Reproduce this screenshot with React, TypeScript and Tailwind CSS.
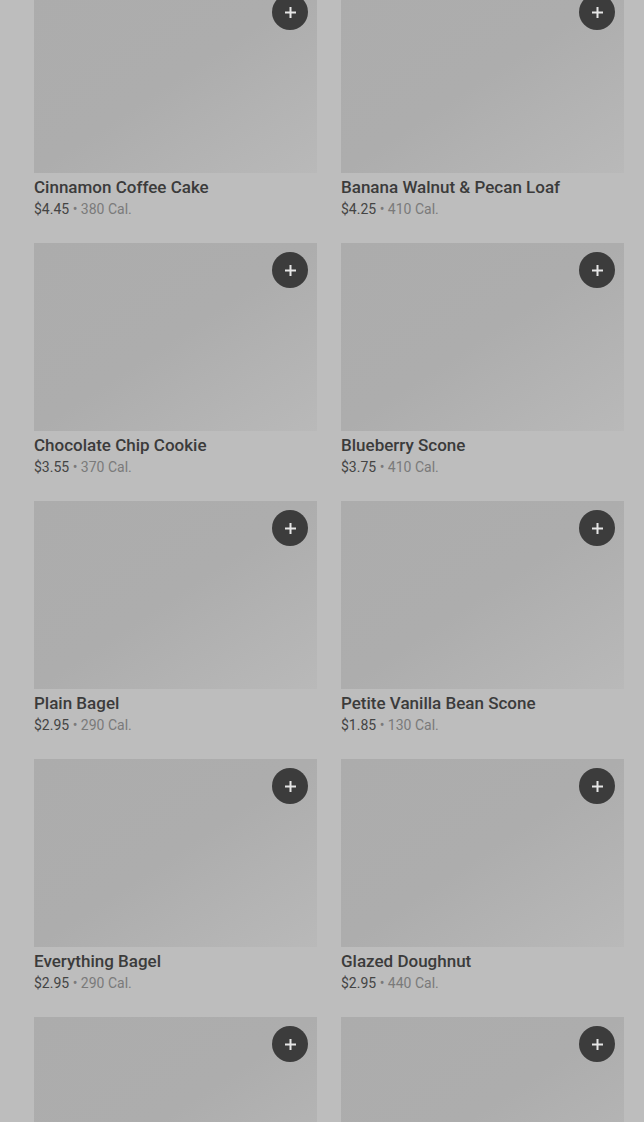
import React from "react";

type Item = { name?: string; price?: string; cal?: string };

const items: Item[] = [
  { name: "Cinnamon Coffee Cake", price: "$4.45", cal: "380 Cal." },
  { name: "Banana Walnut & Pecan Loaf", price: "$4.25", cal: "410 Cal." },
  { name: "Chocolate Chip Cookie", price: "$3.55", cal: "370 Cal." },
  { name: "Blueberry Scone", price: "$3.75", cal: "410 Cal." },
  { name: "Plain Bagel", price: "$2.95", cal: "290 Cal." },
  { name: "Petite Vanilla Bean Scone", price: "$1.85", cal: "130 Cal." },
  { name: "Everything Bagel", price: "$2.95", cal: "290 Cal." },
  { name: "Glazed Doughnut", price: "$2.95", cal: "440 Cal." },
  {},
  {},
];

const Card = ({ item }: { item: Item }) => (
  <div className="flex flex-col">
    <div className="relative h-[188px] w-full bg-gradient-to-br from-[#acacac] via-[#adadad] to-[#b9b9b9]">
      <button className="absolute right-[9px] top-[9px] flex h-9 w-9 items-center justify-center rounded-full bg-[#3c3c3c]">
        <svg width="13" height="13" viewBox="0 0 13 13">
          <path d="M6.5 1v11M1 6.5h11" stroke="#e6e6e6" strokeWidth="2" />
        </svg>
      </button>
    </div>
    {item.name && (
      <>
        <h3 className="mt-[4px] text-[17px] leading-[20px] font-medium text-[#3b3b3b]">
          {item.name}
        </h3>
        <p className="mt-[3px] text-[14px] leading-[18px] text-[#444]">
          {item.price} <span className="text-[#7a7a7a]">• {item.cal}</span>
        </p>
      </>
    )}
  </div>
);

const App = () => {
  return (
    <div
      className="h-[1122px] w-full overflow-hidden bg-[#bdbdbd]"
      style={{ fontFamily: "Roboto, 'Liberation Sans', sans-serif" }}
    >
      <div className="mt-[-15px] grid grid-cols-2 gap-x-6 gap-y-[25px] pl-[34px] pr-5">
        {items.map((item, i) => (
          <Card key={i} item={item} />
        ))}
      </div>
    </div>
  );
};

export default App;
